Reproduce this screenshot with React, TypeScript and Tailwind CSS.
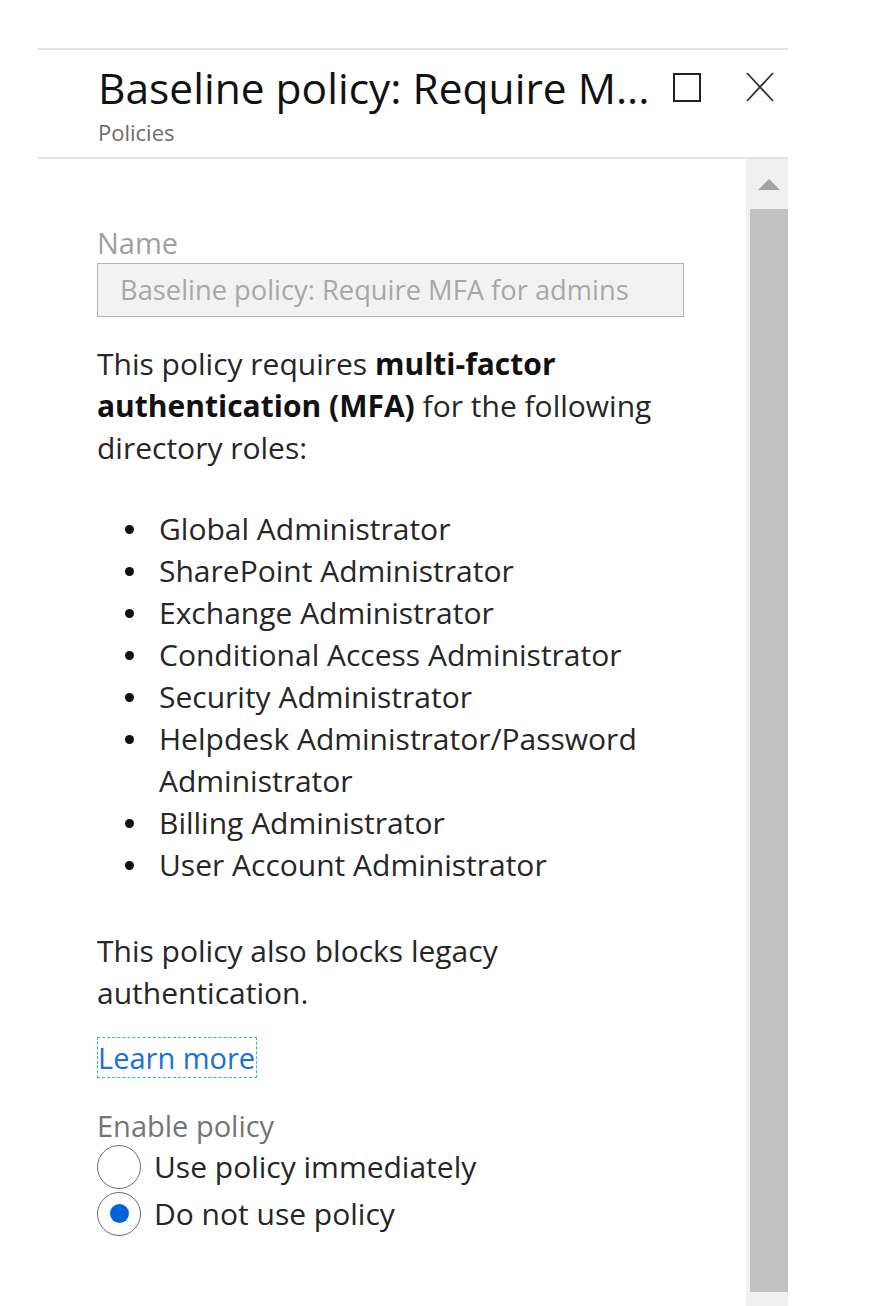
const roles = [
  "Global Administrator",
  "SharePoint Administrator",
  "Exchange Administrator",
  "Conditional Access Administrator",
  "Security Administrator",
  "Helpdesk Administrator/Password Administrator",
  "Billing Administrator",
  "User Account Administrator",
];

function Radio({ checked, label }: { checked?: boolean; label: string }) {
  return (
    <label className="flex h-[47px] items-center gap-[13px]">
      <span className="flex h-[44px] w-[44px] shrink-0 items-center justify-center rounded-full border-[1.5px] border-[#6e6e6e] bg-white">
        {checked && <span className="h-[19px] w-[19px] rounded-full bg-[#0063d8]" />}
      </span>
      <span className="text-[30px] leading-[40px] text-[#262626]">{label}</span>
    </label>
  );
}

export default function App() {
  return (
    <div className="min-h-screen bg-white font-['Open_Sans','Noto_Sans',sans-serif]">
      <div className="ml-[38px] flex h-[1306px] w-[750px] flex-col overflow-hidden pt-[48px]">
        <div className="flex h-[111px] items-start justify-between border-y-2 border-[#e3e3e3] pl-[60px] pr-[14px] pt-[12px]">
          <div className="flex flex-col">
            <h1 className="whitespace-nowrap text-[42.5px] leading-[52px] text-[#111]">
              Baseline policy: Require M...
            </h1>
            <span className="mt-[6px] text-[22px] leading-[24px] text-[#6b6b6b]">Policies</span>
          </div>
          <div className="flex items-center gap-[45px] pt-[10px]">
            <span className="block h-[29px] w-[28px] border-2 border-[#222]" />
            <svg width="28" height="30" viewBox="0 0 28 30" className="text-[#333]">
              <path d="M1 1 L27 29 M27 1 L1 29" stroke="currentColor" strokeWidth="1.8" fill="none" />
            </svg>
          </div>
        </div>

        <div className="flex min-h-0 flex-1">
          <div className="flex-1 pl-[59px] pr-[62px] pt-[67px]">
            <div className="text-[29px] leading-[34px] text-[#a0a0a0]">Name</div>
            <div className="mt-[3px] flex h-[54px] items-center whitespace-nowrap border-[1.5px] border-[#b3b3b3] bg-[#f2f2f2] pl-[22px] text-[27.3px] text-[#a8a8a8]">
              Baseline policy: Require MFA for admins
            </div>

            <p className="mt-[26px] text-[30px] leading-[42px] text-[#262626]">
              This policy requires <b className="font-bold text-[#111]">multi-factor authentication (MFA)</b> for the following directory roles:
            </p>

            <ul className="mt-[39px] text-[30px] leading-[42px] text-[#262626]">
              {roles.map((r) => (
                <li key={r} className="flex">
                  <span className="flex h-[42px] w-[62px] shrink-0 items-center pl-[28px]">
                    <span className="h-[9px] w-[9px] rounded-full bg-[#111]" />
                  </span>
                  <span>{r}</span>
                </li>
              ))}
            </ul>

            <p className="mt-[44px] text-[30px] leading-[42px] text-[#262626]">
              This policy also blocks legacy authentication.
            </p>

            <a
              href="#"
              className="mt-[23px] block w-fit border-[1.5px] border-dashed border-[#2bb5e8] pr-[1px] text-[29px] leading-[39px] text-[#1a6fd9]"
            >
              Learn more
            </a>

            <div className="mt-[31px] text-[29px] leading-[34px] text-[#757575]">Enable policy</div>
            <div className="flex flex-col">
              <Radio label="Use policy immediately" />
              <Radio checked label="Do not use policy" />
            </div>
          </div>

          <div className="flex w-[42px] shrink-0 flex-col bg-[#f0f0f0]">
            <div className="flex h-[50px] items-center justify-center pl-[4px]">
              <svg width="22" height="11" viewBox="0 0 22 11">
                <path d="M11 0 L22 11 L0 11 Z" fill="#a3a3a3" />
              </svg>
            </div>
            <div className="ml-[4px] flex-1 bg-[#c1c1c1]" />
            <div className="h-[14px]" />
          </div>
        </div>
      </div>
    </div>
  );
}
